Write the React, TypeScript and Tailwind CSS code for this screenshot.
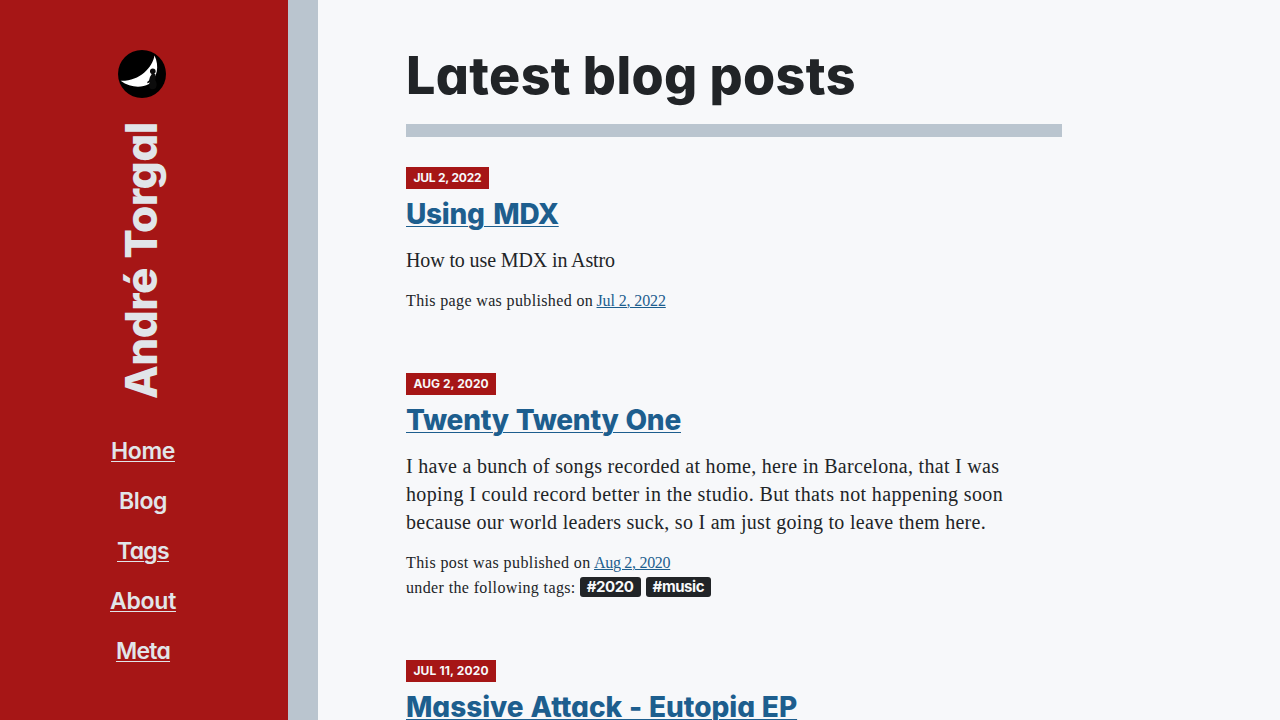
type Line = { text: string; spacing: string };
type Post = {
  date: string;
  dateSpacing: string;
  title: string;
  titleSpacing: string;
  lines: Line[];
  intro: Line;
  day: Line;
  tags: string[];
};

const posts: Post[] = [
  {
    date: 'Jul 2, 2022',
    dateSpacing: 'tracking-[-0.2px]',
    title: 'Using MDX',
    titleSpacing: 'tracking-[-0.3px] [word-spacing:3px]',
    lines: [{ text: 'How to use MDX in Astro', spacing: 'tracking-[-0.12px]' }],
    intro: { text: 'This page was published on', spacing: 'tracking-[0.36px]' },
    day: { text: 'Jul 2, 2022', spacing: 'tracking-[-0.13px]' },
    tags: [],
  },
  {
    date: 'Aug 2, 2020',
    dateSpacing: 'tracking-[0.05px]',
    title: 'Twenty Twenty One',
    titleSpacing: 'tracking-[-0.24px] [word-spacing:1px]',
    lines: [
      { text: 'I have a bunch of songs recorded at home, here in Barcelona, that I was', spacing: 'tracking-[0.3px]' },
      { text: 'hoping I could record better in the studio. But thats not happening soon', spacing: 'tracking-[0.37px]' },
      { text: 'because our world leaders suck, so I am just going to leave them here.', spacing: 'tracking-[0.28px]' },
    ],
    intro: { text: 'This post was published on', spacing: 'tracking-[0.4px]' },
    day: { text: 'Aug 2, 2020', spacing: 'tracking-[-0.3px]' },
    tags: ['#2020', '#music'],
  },
  {
    date: 'Jul 11, 2020',
    dateSpacing: 'tracking-[0.15px]',
    title: 'Massive Attack - Eutopia EP',
    titleSpacing: 'tracking-[-0.04px] [word-spacing:0.8px]',
    lines: [],
    intro: { text: 'This post was published on', spacing: 'tracking-[0.4px]' },
    day: { text: 'Jul 11, 2020', spacing: 'tracking-[-0.3px]' },
    tags: [],
  },
];

const nav = [
  { label: 'Home', style: 'tracking-[-0.38px] underline' },
  { label: 'Blog', style: 'tracking-[-0.4px]' },
  { label: 'Tags', style: 'tracking-[-0.7px] underline' },
  { label: 'About', style: 'tracking-[-0.26px] underline' },
  { label: 'Meta', style: 'tracking-[-0.75px] underline' },
];

const sans = "font-['Inter','Liberation_Sans',sans-serif] [font-feature-settings:'cv11']";

function Logo() {
  return (
    <svg viewBox="0 0 48 48" className="mr-[2px] size-12 shrink-0">
      <circle cx="24" cy="24" r="24" fill="#000" />
      <path d="M36.5 5.5C34.5 18 21 31.5 2.6 30.8C12 37.8 23.5 38 30.5 34.2C39.5 28 41.5 16 36.5 5.5Z" fill="#fff" />
      <circle cx="34.8" cy="21.2" r="2.8" fill="#090909" />
      <path d="M34 23.5L37.3 24Q38.2 27 37.2 30Q39.8 34 37.8 38Q34.5 40.6 31.4 38Q30.5 35.5 32 32.5L29.2 33.3Q28.7 31.5 31 30.5Q32 26 34 23.5Z" fill="#0c0c0c" />
    </svg>
  );
}

function PostItem({ post }: { post: Post }) {
  return (
    <article className="mb-[60px]">
      <div className={`${sans} flex h-[22px] w-fit items-center bg-[#a61616] px-[7.4px] text-xs font-bold whitespace-nowrap text-[#f7f9fb] uppercase ${post.dateSpacing}`}>
        {post.date}
      </div>
      <h2 className={`${sans} mt-2 text-[28px] leading-[35px] font-extrabold whitespace-nowrap`}>
        <a href="#" className={`text-[#1d5e8e] underline decoration-1 underline-offset-2 ${post.titleSpacing}`}>{post.title}</a>
      </h2>
      <div className="mt-[14px] text-[20px] leading-7 whitespace-nowrap">
        {post.lines.map((l) => (
          <p key={l.text} className={l.spacing}>{l.text}</p>
        ))}
      </div>
      <div className="mt-[14px] text-base leading-[25px] whitespace-nowrap">
        <p className="flex gap-[3.4px]">
          <span className={post.intro.spacing}>{post.intro.text}</span>
          <a href="#" className={`text-[#1d5e8e] underline decoration-1 underline-offset-1 ${post.day.spacing}`}>{post.day.text}</a>
        </p>
        {post.tags.length > 0 && (
          <div className="flex items-center gap-[5px]">
            <span className="mr-[-1px] tracking-[0.37px]">under the following tags:</span>
            {post.tags.map((t) => (
              <a key={t} href="#" className={`${sans} mb-[2px] flex h-5 items-center rounded-[3px] bg-[#212427] px-[7px] pt-px text-[15px] leading-5 font-bold tracking-[-0.4px] text-[#f7f9fb]`}>
                {t}
              </a>
            ))}
          </div>
        )}
      </div>
    </article>
  );
}

export default function App() {
  return (
    <div className="flex h-[720px] overflow-hidden bg-[#f7f8fa] font-['Liberation_Serif',serif] text-[#212427]">
      <aside className={`${sans} flex w-[318px] shrink-0 flex-col items-center border-r-[30px] border-[#bac5cf] bg-[#a61616] pt-[50px] pr-[2px] text-[#e1e5e9]`}>
        <Logo />
        <h1 className="mt-[25px] mr-[5px] flex h-[276px] w-12 rotate-180 items-center justify-center text-[44px] leading-[48px] font-extrabold tracking-[-0.5px] whitespace-nowrap [writing-mode:vertical-rl]">
          André Torgal
        </h1>
        <nav className="mt-[27px] flex flex-col items-center">
          {nav.map((n) => (
            <a key={n.label} href="#" className={`text-[23px] leading-[50px] font-semibold decoration-1 underline-offset-2 ${n.style}`}>
              {n.label}
            </a>
          ))}
        </nav>
      </aside>
      <main className="w-[744px] shrink-0 pt-[44px] pl-[88px]">
        <h1 className={`${sans} h-20 text-[52px] leading-[63px] font-extrabold tracking-[0.38px] whitespace-nowrap`}>
          Latest blog posts
        </h1>
        <div className="mb-[30px] h-[13px] bg-[#bac5cf]" />
        {posts.map((p) => (
          <PostItem key={p.title} post={p} />
        ))}
      </main>
    </div>
  );
}
